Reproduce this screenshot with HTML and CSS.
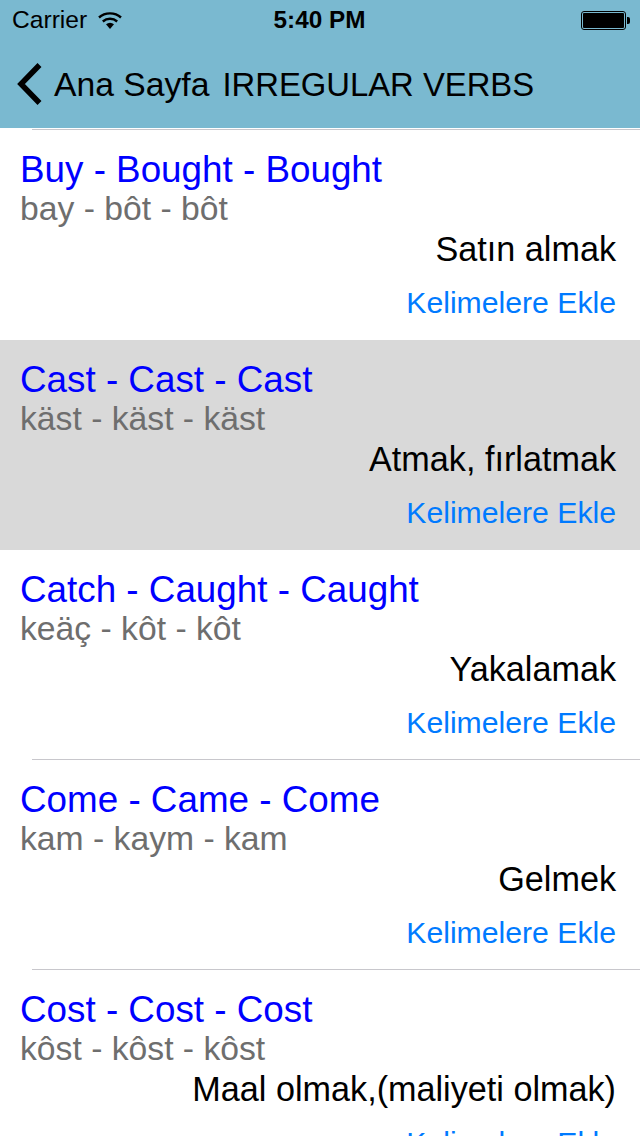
FILE: index.html
```html
<!DOCTYPE html>
<html lang="tr">
<head>
<meta charset="utf-8">
<title>Irregular Verbs</title>
<link rel="stylesheet" href="styles.css">
</head>
<body>
<div class="app">
  <header class="head">
    <div class="status">
      <div class="status-left">
        <span class="carrier">Carrier</span>
        <svg class="wifi" width="24" height="18" viewBox="0 0 24 18"><path d="M1 6.500C7 1 17 1 23 6.500" fill="none" stroke="#000" stroke-width="2.400"/><path d="M4.800 10.500c4.200-3.600 10.200-3.600 14.400 0" fill="none" stroke="#000" stroke-width="2.400"/><path d="M8 13.200c2.500-2 5.500-2 8 0L12 18z" fill="#000"/></svg>
      </div>
      <div class="status-time">5:40 PM</div>
      <div class="status-right">
        <div class="battery"><div class="battery-fill"></div></div>
        <div class="battery-tip"></div>
      </div>
    </div>
    <nav class="nav">
      <svg class="chevron" width="28" height="44" viewBox="0 0 28 44"><path d="M23.500 3 5 22l18.500 19" fill="none" stroke="#000" stroke-width="5.500"/></svg>
      <div class="nav-text">
        <span class="back">Ana Sayfa</span>
        <span class="title">IRREGULAR VERBS</span>
      </div>
    </nav>
  </header>
  <main class="list">
    <section class="row sep">
      <div class="verb">Buy - Bought - Bought</div>
      <div class="phon">bay - bôt - bôt</div>
      <div class="mean">Satın almak</div>
      <div class="add">Kelimelere Ekle</div>
    </section>
    <section class="row selected">
      <div class="verb">Cast - Cast - Cast</div>
      <div class="phon">käst - käst - käst</div>
      <div class="mean">Atmak, fırlatmak</div>
      <div class="add">Kelimelere Ekle</div>
    </section>
    <section class="row">
      <div class="verb">Catch - Caught - Caught</div>
      <div class="phon">keäç - kôt - kôt</div>
      <div class="mean">Yakalamak</div>
      <div class="add">Kelimelere Ekle</div>
    </section>
    <section class="row sep">
      <div class="verb">Come - Came - Come</div>
      <div class="phon">kam - kaym - kam</div>
      <div class="mean">Gelmek</div>
      <div class="add">Kelimelere Ekle</div>
    </section>
    <section class="row sep">
      <div class="verb">Cost - Cost - Cost</div>
      <div class="phon">kôst - kôst - kôst</div>
      <div class="mean">Maal olmak,(maliyeti olmak)</div>
      <div class="add">Kelimelere Ekle</div>
    </section>
  </main>
</div>
</body>
</html>
```
FILE: styles.css
```css
* { box-sizing: border-box; }
html, body { margin: 0; padding: 0; }
body { width: 640px; height: 1136px; overflow: hidden; background: #fff; font-family: "Liberation Sans", Arial, sans-serif; color: #000; }
.app { width: 640px; height: 1136px; overflow: hidden; }
.head { height: 128px; background: #7ab9d0; }
.status { height: 40px; display: grid; grid-template-columns: 1fr auto 1fr; align-items: center; padding: 0 10px 0 12px; font-size: 24px; }
.status-left { display: flex; align-items: center; gap: 11px; }
.carrier { font-size: 24.600px; }
.status-time { font-weight: 700; font-size: 24.300px; margin-right: 3px; }
.status-right { display: flex; justify-content: flex-end; align-items: center; }
.battery { width: 45px; height: 19px; border: 1px solid #000; border-radius: 3px; padding: 1px; }
.battery-fill { height: 100%; background: #000; border-radius: 1px; }
.battery-tip { width: 3px; height: 7px; background: #000; border-radius: 0 2px 2px 0; margin-left: 1px; }
.nav { height: 88px; display: flex; align-items: center; padding-left: 16px; }
.chevron { flex: none; margin-right: 10px; }
.nav-text { display: flex; align-items: baseline; gap: 13px; }
.back { font-size: 33.700px; }
.title { font-size: 32.800px; }
.list { display: block; padding-top: 2px; }
.row { height: 210px; padding: 21px 24px 0 20px; position: relative; }
.sep::before { content: ""; position: absolute; left: 32px; right: 0; top: -1px; height: 1px; background: #c8c7cc; }
.selected { background: #d9d9d9; }
.verb { height: 38px; line-height: 38px; font-size: 36.800px; color: #0000ff; }
.phon { height: 38px; line-height: 38px; font-size: 33.700px; color: #6e6e6e; }
.mean { height: 44px; line-height: 44px; font-size: 34.200px; text-align: right; }
.add { margin-top: 10px; height: 44px; line-height: 44px; font-size: 30.200px; text-align: right; color: #007aff; }
```
